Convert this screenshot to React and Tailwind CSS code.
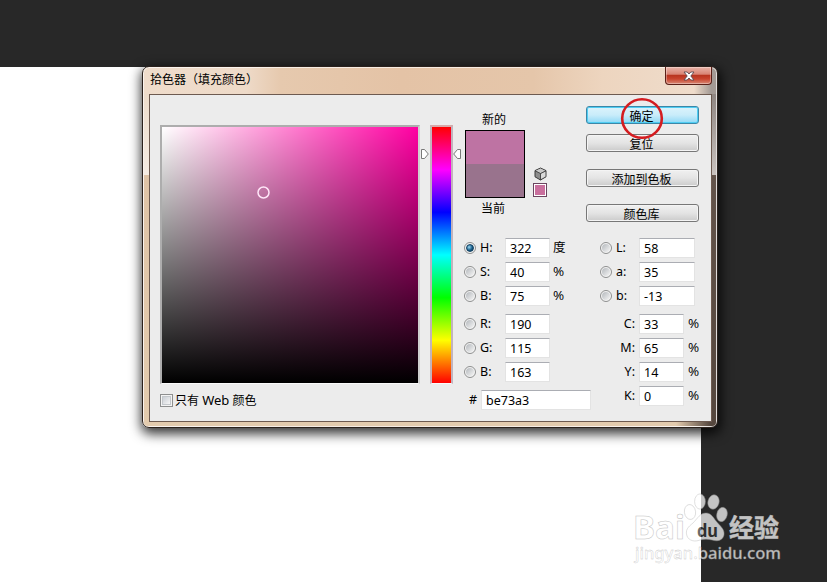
import React from 'react';
import { clsx } from 'clsx';

const HSB = [
  { label: 'H:', value: '322', unit: '度', checked: true },
  { label: 'S:', value: '40', unit: '%' },
  { label: 'B:', value: '75', unit: '%' },
];

const RGB = [
  { label: 'R:', value: '190' },
  { label: 'G:', value: '115' },
  { label: 'B:', value: '163' },
];

const LAB = [
  { label: 'L:', value: '58' },
  { label: 'a:', value: '35' },
  { label: 'b:', value: '-13' },
];

const CMYK = [
  { label: 'C:', value: '33' },
  { label: 'M:', value: '65' },
  { label: 'Y:', value: '14' },
  { label: 'K:', value: '0' },
];

function Radio({ checked }) {
  return (
    <span className="flex h-3 w-3 shrink-0 items-center justify-center rounded-full border border-[#8e8f8f] bg-[#f4f4f4]">
      <span
        className={clsx(
          'h-2 w-2 rounded-full',
          checked
            ? 'border border-[#12405f] bg-[radial-gradient(circle_at_35%_35%,#9fdcf5,#1a5f8c_55%,#0c3450)]'
            : 'bg-linear-to-br from-[#b4b8bc] to-[#f6f6f6]'
        )}
      />
    </span>
  );
}

function Field({ value, className }) {
  return (
    <span
      className={clsx(
        'flex h-5 shrink-0 items-center border border-[#e3e3e3] border-t-[#abadb3] bg-white pt-[2px] pl-1',
        className
      )}
    >
      {value}
    </span>
  );
}

function Percent() {
  return <span className="font-['Open_Sans',sans-serif] text-[13.5px]">%</span>;
}

function RadioRow({ label, value, unit, checked }) {
  return (
    <div className="flex h-5 items-center">
      <Radio checked={checked} />
      <span className="ml-1 w-[25px]">{label}</span>
      <Field value={value} className="w-[45px]" />
      {unit && <span className="ml-[3px]">{unit === '%' ? <Percent /> : unit}</span>}
    </div>
  );
}

function DialogButton({ children, primary }) {
  return (
    <button
      className={clsx(
        'flex h-[18px] w-[113px] items-center justify-center rounded-[3px] border text-xs leading-none',
        primary
          ? 'border-[#3b87a8] bg-linear-to-b from-[#dcf3fc] via-[#c9ecfa] to-[#8ed9f6] shadow-[inset_0_0_0_1px_#4fcdf3]'
          : 'border-[#777] bg-linear-to-b from-[#f0f0f0] via-[#e4e4e4] to-[#cbcbcb] shadow-[inset_0_0_0_1px_#f4f4f4]'
      )}
    >
      <span className="pt-[3px] pr-[2px]">{children}</span>
    </button>
  );
}

function HuePointer({ flip }) {
  return (
    <svg width="8" height="10" viewBox="0 0 8 10" className={clsx('mt-[24px] shrink-0', flip && '-scale-x-100')}>
      <path d="M.5 .5H3.5L7.3 5L3.5 9.5H.5Z" fill="#fff" stroke="#6b6b6b" strokeWidth="0.9" strokeLinejoin="round" />
    </svg>
  );
}

function CubeIcon() {
  return (
    <svg width="13" height="14" viewBox="0 0 13 14">
      <path d="M6.5 1L12 3.6V9.8L6.5 13L1 9.8V3.6Z" fill="#8c8c8c" stroke="#3a3a3a" strokeLinejoin="round" />
      <path d="M6.5 1.6L11.3 3.8L6.5 6.2L1.7 3.8Z" fill="#c9c9c9" />
      <path d="M7 6.8L11.4 4.6V9.4L7 12Z" fill="#d9d9d9" />
      <path d="M1 3.8L6.5 6.5L12 3.8M6.5 6.5V13" fill="none" stroke="#3a3a3a" strokeWidth="0.8" />
    </svg>
  );
}

function TitleBar() {
  return (
    <div className="flex h-[27px] shrink-0 items-start justify-between pl-[7px] pr-[5px]">
      <span className="pt-[4px] text-xs leading-[18px]">拾色器（填充颜色）</span>
      <button className="flex h-[18px] w-[47px] items-center justify-center rounded-b-[4px] border border-t-0 border-[#5a2018] bg-[linear-gradient(to_bottom,#e9b4a9_0,#d98474_42%,#b93520_50%,#c8432d_70%,#d98a76_100%)] shadow-[inset_0_0_0_1px_#ffffff55]">
        <svg width="12" height="10" viewBox="0 0 12 10">
          <path d="M1 1H4.2L6 3L7.8 1H11L7.8 5L11 9H7.8L6 7L4.2 9H1L4.2 5Z" fill="#fff" stroke="#5b4a50" strokeWidth="0.9" />
        </svg>
      </button>
    </div>
  );
}

function Spectrum() {
  return (
    <div className="mt-[30px] ml-[10px] flex shrink-0 flex-col">
      <div className="flex items-start">
        <div className="h-[259px] w-[260px] border-2 border-[#adadad] border-r-[#cfcfcf] border-b-[1px] border-b-[#fafafa] bg-[#ff00a2] bg-[linear-gradient(to_top,#000,transparent),linear-gradient(to_right,#fff,transparent)] bg-origin-padding">
          <svg className="mt-[59px] ml-[95px]" width="13" height="13" viewBox="0 0 13 13">
            <circle cx="6.5" cy="6.500" r="5.500" fill="none" stroke="#ffe6f8" strokeWidth="1.500" />
          </svg>
        </div>
        <div className="ml-[1px] flex">
          <HuePointer />
        </div>
        <div className="ml-[1px] h-[259px] w-[23px] border-x-2 border-t-2 border-b border-[#c3b3bd] border-t-[#d8a9a9] border-b-[#fafafa] bg-[linear-gradient(to_bottom,#f00_0%,#f0f_16.7%,#00f_33.3%,#0ff_50%,#0f0_66.7%,#ff0_83.3%,#f00_100%)] bg-origin-padding" />
        <HuePointer flip />
      </div>
      <div className="mt-[9px] flex h-[14px] items-center">
        <span className="flex h-[13px] w-[13px] border border-[#8e8f8f] bg-[#f4f4f4] p-px">
          <span className="flex-1 border border-[#c4c8cc] bg-linear-to-br from-[#cbcfd5] to-[#f6f6f6]" />
        </span>
        <span className="ml-[2px] pt-px text-xs leading-none whitespace-pre">只有 <span className="text-[13px]">Web</span> 颜色</span>
      </div>
    </div>
  );
}

function Values() {
  return (
    <div className="ml-[3px] flex w-[130px] shrink-0 flex-col">
      <div className="flex h-[103px] items-end">
        <div className="ml-px w-[60px] shrink-0">
          <p className="-ml-[2px] text-center text-xs leading-[20px]">新的</p>
          <div className="flex h-[68px] flex-col border border-black">
            <div className="flex-1 bg-[#be73a3]" />
            <div className="flex-1 bg-[#99738d]" />
          </div>
        </div>
        <div className="mb-px ml-[8px] flex flex-col items-center gap-[2px]">
          <CubeIcon />
          <div className="h-[14px] w-[14px] border border-[#6b4560] bg-[#c96f9d] shadow-[inset_0_0_0_1px_#fff]" />
        </div>
      </div>
      <p className="-ml-px w-[60px] pt-px text-center text-xs leading-[20px]">当前</p>
      <div className="mt-[19px] flex flex-col gap-1">
        {HSB.map((row) => (
          <RadioRow key={row.label} {...row} />
        ))}
      </div>
      <div className="mt-2 flex flex-col gap-1">
        {RGB.map((row) => (
          <RadioRow key={row.label} {...row} />
        ))}
      </div>
      <div className="mt-2 ml-[5px] flex items-center">
        <span className="w-3 shrink-0">#</span>
        <Field value="be73a3" className="w-[110px]" />
      </div>
    </div>
  );
}

function Actions() {
  return (
    <div className="mt-[11px] -ml-[8px] flex w-[125px] shrink-0 flex-col">
      <div className="relative">
        <DialogButton primary>确定</DialogButton>
        <svg className="absolute -top-[9px] left-[34px]" width="44" height="43" viewBox="0 0 44 43">
          <ellipse cx="22" cy="21.500" rx="19.800" ry="19.300" fill="none" stroke="#d41c20" strokeWidth="2.600" />
        </svg>
      </div>
      <div className="mt-[10px] flex flex-col gap-[17px]">
        <DialogButton>复位</DialogButton>
        <DialogButton>添加到色板</DialogButton>
        <DialogButton>颜色库</DialogButton>
      </div>
      <div className="mt-[16px] ml-[14px] flex flex-col gap-1">
        {LAB.map(({ label, value }) => (
          <div key={label} className="flex h-5 items-center">
            <Radio />
            <span className="ml-1 w-[23px]">{label}</span>
            <Field value={value} className="w-[56px]" />
          </div>
        ))}
      </div>
      <div className="mt-2 flex flex-col gap-1">
        {CMYK.map(({ label, value }) => (
          <div key={label} className="flex h-5 items-center">
            <span className="w-[49px] text-right">{label}</span>
            <Field value={value} className="ml-[4px] w-[45px]" />
            <span className="ml-[4px]">
              <Percent />
            </span>
          </div>
        ))}
      </div>
    </div>
  );
}

function FrameEdge({ right }) {
  return (
    <div
      className={clsx(
        'shrink-0',
        right
          ? 'mr-px w-[4px] bg-[linear-gradient(to_bottom,#8f8682_0,#c9c2be_81px,#63544b_81px,#55473e_100%)]'
          : 'ml-px w-[5px] bg-[linear-gradient(to_bottom,#eddccb_0,#f5ebe2_81px,#dfc3a6_81px,#e3cbae_100%)]'
      )}
    />
  );
}

function ColorPicker() {
  return (
    <div className="absolute top-[66px] left-[142px] flex h-[362px] w-[576px] flex-col rounded-[7px] border border-[#2b211c] bg-[linear-gradient(to_right,#efdccb_0,#eedac8_18%,#e6c9ae_24%,#e4c3a6_45%,#e5c6aa_68%,#edd5bf_80%,#efdccb_96%,#a39a95_99%)] shadow-[inset_0_0_0_1px_#ffffffaa,1px_4px_12px_2px_#000000c8]">
      <TitleBar />
      <div className="flex h-[328px] shrink-0 flex-row">
        <FrameEdge />
        <div className="flex flex-1 border border-[#6d5a50] bg-[#ececec]">
          <Spectrum />
          <Values />
          <Actions />
        </div>
        <FrameEdge right />
      </div>
      <div className="mx-px mb-px flex-1 rounded-b-[5px] bg-[linear-gradient(to_right,#e3cbae_93%,#55473e_99%)]" />
    </div>
  );
}

function Watermark() {
  return (
    <svg
      className="absolute top-[486px] left-[622px]"
      width="180"
      height="90"
      viewBox="622 486 180 90"
      fill="#fff"
      stroke="#aaa"
      strokeWidth="0.5"
      opacity="0.72"
    >
      <text x="633" y="539" fontSize="33" fontWeight="700" fontFamily="'Noto Sans', sans-serif" textLength="52" lengthAdjust="spacingAndGlyphs">Bai</text>
      <ellipse cx="690" cy="512" rx="5.6" ry="7.5" transform="rotate(-8 690 512)" />
      <ellipse cx="700" cy="501.500" rx="5.400" ry="7.600" />
      <ellipse cx="713.500" cy="502" rx="5.600" ry="7.300" transform="rotate(14 713.5 502)" />
      <ellipse cx="722" cy="514.500" rx="5.200" ry="7.300" transform="rotate(14 722 514.5)" />
      <path d="M706 513C700 513 698 518 693 523C688 527 685 530 687 536C689 541 695 542 700 540C704 539 708 539 712 540C718 542 723 540 724 535C725 529 720 526 716 521C713 517 711 513 706 513Z" />
      <text x="697" y="536.500" fontSize="18" fontWeight="700" fontFamily="'Noto Sans', sans-serif" fill="#333" stroke="none" textLength="21" lengthAdjust="spacingAndGlyphs">du</text>
      <text x="729" y="537" fontSize="25" fontWeight="700" fontFamily="'Noto Sans CJK SC', sans-serif" stroke="#fff" strokeWidth="0.4">经验</text>
      <text x="635" y="559" fontSize="17" fontWeight="500" fontFamily="'Noto Sans', sans-serif" strokeWidth="0.35" textLength="146" lengthAdjust="spacingAndGlyphs">jingyan.baidu.com</text>
    </svg>
  );
}

export default function App() {
  return (
    <div className="relative h-[582px] w-[827px] overflow-hidden bg-[#282828] pt-[67px] font-['Noto_Sans','Noto_Sans_CJK_SC',sans-serif] text-[12.5px] leading-none text-black">
      <div className="h-[515px] w-[701px] bg-white" />
      <ColorPicker />
      <Watermark />
    </div>
  );
}
